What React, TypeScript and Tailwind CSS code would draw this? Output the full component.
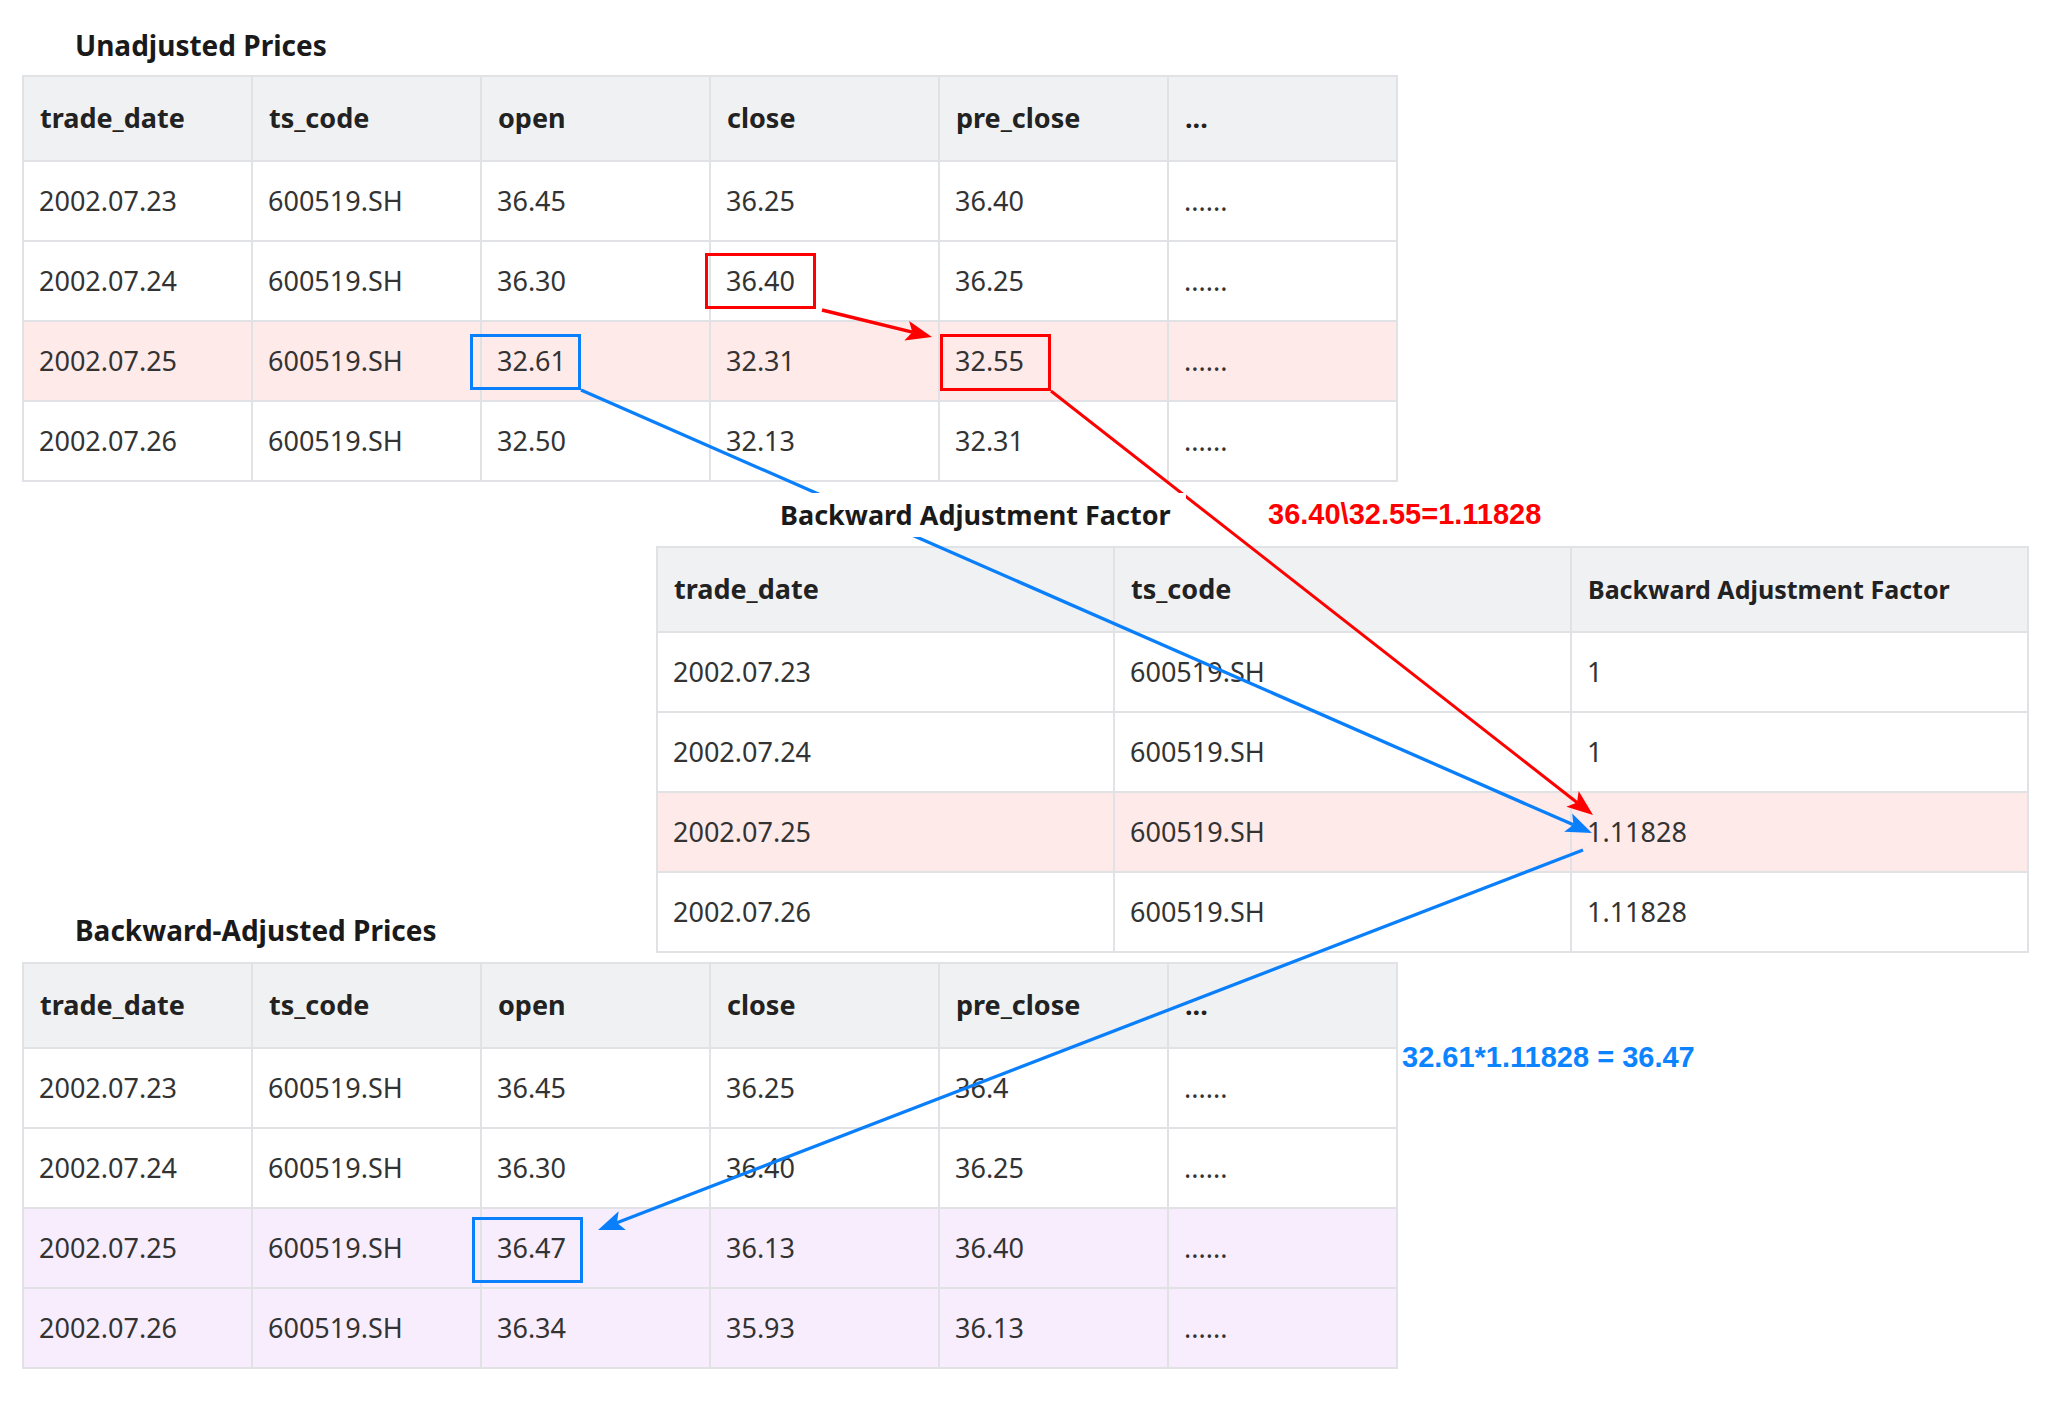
import React from "react";

type Tone = "plain" | "pink" | "purple";
type Row = { cells: string[]; tone?: Tone };

const toneBg: Record<Tone, string> = {
  plain: "bg-white",
  pink: "bg-[#ffeaea]",
  purple: "bg-[#f8edfd]",
};

const unadjusted: Row[] = [
  { cells: ["2002.07.23", "600519.SH", "36.45", "36.25", "36.40", "......"] },
  { cells: ["2002.07.24", "600519.SH", "36.30", "36.40", "36.25", "......"] },
  { cells: ["2002.07.25", "600519.SH", "32.61", "32.31", "32.55", "......"], tone: "pink" },
  { cells: ["2002.07.26", "600519.SH", "32.50", "32.13", "32.31", "......"] },
];

const factors: Row[] = [
  { cells: ["2002.07.23", "600519.SH", "1"] },
  { cells: ["2002.07.24", "600519.SH", "1"] },
  { cells: ["2002.07.25", "600519.SH", "1.11828"], tone: "pink" },
  { cells: ["2002.07.26", "600519.SH", "1.11828"] },
];

const adjusted: Row[] = [
  { cells: ["2002.07.23", "600519.SH", "36.45", "36.25", "36.4", "......"] },
  { cells: ["2002.07.24", "600519.SH", "36.30", "36.40", "36.25", "......"] },
  { cells: ["2002.07.25", "600519.SH", "36.47", "36.13", "36.40", "......"], tone: "purple" },
  { cells: ["2002.07.26", "600519.SH", "36.34", "35.93", "36.13", "......"], tone: "purple" },
];

const priceHeaders = ["trade_date", "ts_code", "open", "close", "pre_close", "..."];

function DataTable({
  headers,
  rows,
  gridCols,
  lastHeadSmall,
}: {
  headers: string[];
  rows: Row[];
  gridCols: string;
  lastHeadSmall?: boolean;
}) {
  return (
    <div className={`grid ${gridCols} border-l-2 border-t-2 border-[#e1e2e5]`}>
      {headers.map((h, i) => (
        <div
          key={h}
          className={`flex h-[85px] items-center border-b-2 border-r-2 border-[#e1e2e5] bg-[#f0f1f3] pl-[16px] font-bold text-[#222] ${
            lastHeadSmall && i === headers.length - 1 ? "text-[25px]" : "text-[27px]"
          }`}
        >
          {h}
        </div>
      ))}
      {rows.map((r, ri) =>
        r.cells.map((c, ci) => (
          <div
            key={`${ri}-${ci}`}
            className={`flex h-[80px] items-center border-b-2 border-r-2 border-[#e1e2e5] pl-[15px] text-[27px] text-[#333] ${toneBg[r.tone ?? "plain"]}`}
          >
            {c}
          </div>
        ))
      )}
    </div>
  );
}

function Arrow({
  x1,
  y1,
  x2,
  y2,
  color,
  width = 3,
}: {
  x1: number;
  y1: number;
  x2: number;
  y2: number;
  color: string;
  width?: number;
}) {
  const len = Math.hypot(x2 - x1, y2 - y1);
  const ux = (x2 - x1) / len;
  const uy = (y2 - y1) / len;
  const nx = -uy;
  const ny = ux;
  const L = 26;
  const W = 10;
  const bx = x2 - ux * L;
  const by = y2 - uy * L;
  const kx = x2 - ux * L * 0.78;
  const ky = y2 - uy * L * 0.78;
  const pts = [
    [x2, y2],
    [bx + nx * W, by + ny * W],
    [kx, ky],
    [bx - nx * W, by - ny * W],
  ]
    .map((p) => p.join(","))
    .join(" ");
  return (
    <g>
      <line x1={x1} y1={y1} x2={kx} y2={ky} stroke={color} strokeWidth={width} />
      <polygon points={pts} fill={color} />
    </g>
  );
}

function Overlay() {
  const red = "#ff0000";
  const blue = "#0a7ffc";
  return (
    <svg
      className="pointer-events-none absolute left-0 top-0 z-10"
      width={2048}
      height={1411}
      viewBox="0 0 2048 1411"
    >
      <rect x={471.5} y={335.5} width={108} height={53} fill="none" stroke={blue} strokeWidth={3} />
      <rect x={706.5} y={254.5} width={108} height={53} fill="none" stroke={red} strokeWidth={3} />
      <rect x={941.5} y={335.5} width={108} height={54} fill="none" stroke={red} strokeWidth={3} />
      <rect x={473.5} y={1218.5} width={108} height={63} fill="none" stroke={blue} strokeWidth={3} />
      <Arrow x1={822} y1={310} x2={932} y2={337} color={red} width={3.5} />
      <Arrow x1={1051} y1={391} x2={1593} y2={815} color={red} />
      <Arrow x1={581} y1={390} x2={1592} y2={833} color={blue} width={3.3} />
      <Arrow x1={1583} y1={850} x2={598} y2={1230} color={blue} width={3.3} />
    </svg>
  );
}

export default function App() {
  return (
    <div className="relative h-[1411px] w-[2048px] overflow-hidden bg-white font-['Noto_Sans',sans-serif]">
      <Overlay />

      <div className="pl-[22px]">
        <div className="flex h-[75px] items-end pb-[11px] pl-[53px] text-[28px] font-bold leading-[38px] text-[#1a1a1a]">
          Unadjusted Prices
        </div>
        <div className="w-fit">
          <DataTable headers={priceHeaders} rows={unadjusted} gridCols="grid-cols-[repeat(6,229px)]" />
        </div>
      </div>

      <div className="ml-[656px] mt-[11px] flex h-[44px] items-center">
        <div className="relative z-20 ml-[106px] flex h-[44px] w-[424px] items-center bg-white pl-[18px] text-[27px] font-bold text-[#1a1a1a]">
          Backward Adjustment Factor
        </div>
        <div className="ml-[82px] font-['Liberation_Sans',Arial,sans-serif] text-[29px] font-bold text-[#ff0000]">
          36.40\32.55=1.11828
        </div>
      </div>

      <div className="ml-[656px] mt-[9px] w-fit">
        <DataTable
          headers={["trade_date", "ts_code", "Backward Adjustment Factor"]}
          rows={factors}
          gridCols="grid-cols-[repeat(3,457px)]"
          lastHeadSmall
        />
      </div>

      <div className="mt-[-42px] pl-[22px]">
        <div className="flex h-[38px] items-center pl-[53px] text-[28px] font-bold text-[#1a1a1a]">
          Backward-Adjusted Prices
        </div>
        <div className="mt-[13px] flex items-start">
          <DataTable headers={priceHeaders} rows={adjusted} gridCols="grid-cols-[repeat(6,229px)]" />
          <div className="ml-[4px] mt-[79px] font-['Liberation_Sans',Arial,sans-serif] text-[29px] font-bold leading-[32px] text-[#0c84ff]">
            32.61*1.11828 = 36.47
          </div>
        </div>
      </div>
    </div>
  );
}
